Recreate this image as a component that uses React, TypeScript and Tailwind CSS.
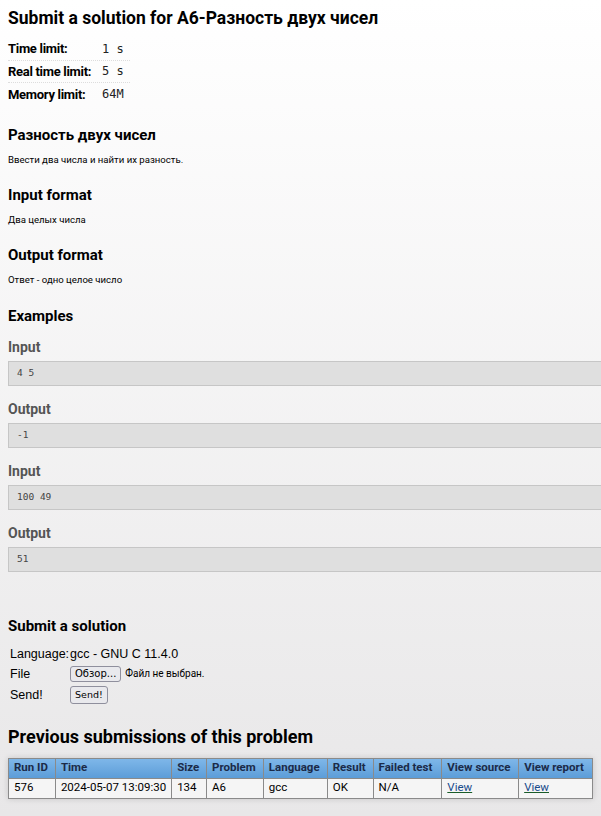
export default function App() {
  const limits = [
    ["Time limit:", "1 s"],
    ["Real time limit:", "5 s"],
    ["Memory limit:", "64M"],
  ];

  const examples = [
    ["Input", "4 5"],
    ["Output", "-1"],
    ["Input", "100 49"],
    ["Output", "51"],
  ];

  const cols = [
    { name: "Run ID", w: "w-[47px]" },
    { name: "Time", w: "w-[115px]" },
    { name: "Size", w: "w-[35px]" },
    { name: "Problem", w: "w-[57px]" },
    { name: "Language", w: "w-[64px]" },
    { name: "Result", w: "w-[46px]" },
    { name: "Failed test", w: "w-[69px]" },
    { name: "View source", w: "w-[77px]" },
    { name: "View report", w: "w-[74px]" },
  ];

  const roboto = { fontFamily: "Roboto, 'Liberation Sans', sans-serif" };

  return (
    <div
      className="min-h-[816px] w-full overflow-hidden bg-gradient-to-b from-white to-[#e8e7e8] text-black"
      style={roboto}
    >
      <div className="px-2 pt-[7px]">
        <h1 className="text-[17.5px] font-bold leading-[22px]">
          Submit a solution for A6-Разность двух чисел
        </h1>

        {/* Лимиты */}
        <div className="mt-[9px] w-[122px]">
          {limits.map(([k, v], i) => (
            <div
              key={k}
              className={`flex h-[22.5px] items-center ${i < 2 ? "border-b border-dotted border-[#dddddd]" : ""}`}
            >
              <span className="w-[94px] shrink-0 text-[13px] font-bold tracking-[-0.3px]">{k}</span>
              <span
                className="text-[12px] text-[#222]"
                style={{ fontFamily: "'DejaVu Sans Mono', monospace" }}
              >
                {v}
              </span>
            </div>
          ))}
        </div>

        <h2 className="mt-[19px] text-[15px] font-bold leading-[20px]">Разность двух чисел</h2>
        <p className="mt-[8px] text-[9.6px] leading-[14px]">Ввести два числа и найти их разность.</p>

        <h2 className="mt-[18px] text-[15px] font-bold leading-[20px]">Input format</h2>
        <p className="mt-[8px] text-[9.6px] leading-[14px]">Два целых числа</p>

        <h2 className="mt-[18px] text-[15px] font-bold leading-[20px]">Output format</h2>
        <p className="mt-[8px] text-[9.6px] leading-[14px]">Ответ - одно целое число</p>

        <h2 className="mt-[19px] text-[15px] font-bold leading-[20px]">Examples</h2>

        <div className="mt-[12px] -mr-4">
          {examples.map(([label, val], i) => (
            <div key={i} className={i === 0 ? "mt-[7px]" : "mt-[14px]"}>
              <div className="text-[14px] font-bold leading-[18px] text-[#555]">{label}</div>
              <div
                className="mt-[5px] flex h-[25px] items-center border border-[#c6c6c6] bg-[#dfdfdf] pl-2 text-[9.5px] text-[#444]"
                style={{ fontFamily: "'DejaVu Sans Mono', monospace" }}
              >
                {val}
              </div>
            </div>
          ))}
        </div>

        <h2 className="mt-[44px] text-[15px] font-bold leading-[20px]">Submit a solution</h2>

        <div
          className="mt-[8px] pl-[2px] text-[12.5px] leading-[20px]"
          style={{ fontFamily: "'Liberation Sans', Arial, sans-serif" }}
        >
          <div className="flex">
            <span className="w-[60px]">Language:</span>
            <span>gcc - GNU C 11.4.0</span>
          </div>
          <div className="flex items-center">
            <span className="w-[60px]">File</span>
            <button
              className="h-[16px] rounded-[3px] border border-[#8f8f9d] bg-[#e9e9ed] px-[4px] text-[10px] leading-[14px]"
              style={{ fontFamily: "'DejaVu Sans', sans-serif" }}
            >
              Обзор...
            </button>
            <span className="ml-[4px] text-[10px]" style={roboto}>
              Файл не выбран.
            </span>
          </div>
          <div className="mt-[1px] flex items-center">
            <span className="w-[60px]">Send!</span>
            <button
              className="h-[18px] rounded-[3px] border border-[#8f8f9d] bg-[#e9e9ed] px-[4px] text-[9.5px] leading-[14px]"
              style={{ fontFamily: "'DejaVu Sans', sans-serif" }}
            >
              Send!
            </button>
          </div>
        </div>

        <h2 className="mt-[21px] text-[18px] font-bold leading-[22px]">
          Previous submissions of this problem
        </h2>

        <table className="mt-[10px] border-collapse border border-[#8a8a8a] text-[11.5px] shadow-[0_0_6px_rgba(0,0,0,0.15)]">
          <thead>
            <tr className="bg-gradient-to-b from-[#80b8ea] to-[#5c9dd8]">
              {cols.map((c) => (
                <th
                  key={c.name}
                  className={`${c.w} h-[20px] border border-[#8a8a8a] px-[5px] text-left font-bold whitespace-nowrap text-[#1b2a48]`}
                >
                  {c.name}
                </th>
              ))}
            </tr>
          </thead>
          <tbody>
            <tr className="bg-[#f5f5f5]">
              {["576", "2024-05-07 13:09:30", "134", "A6", "gcc", "OK", "N/A"].map((v, i) => (
                <td key={i} className="h-[20px] border border-[#8a8a8a] px-[5px] whitespace-nowrap">
                  {v}
                </td>
              ))}
              <td className="border border-[#8a8a8a] px-[5px]">
                <a href="#" className="text-[#1a4c8c] underline decoration-[#1a5c2a]">View</a>
              </td>
              <td className="border border-[#8a8a8a] px-[5px]">
                <a href="#" className="text-[#1a4c8c] underline decoration-[#1a5c2a]">View</a>
              </td>
            </tr>
          </tbody>
        </table>
      </div>
    </div>
  );
}
